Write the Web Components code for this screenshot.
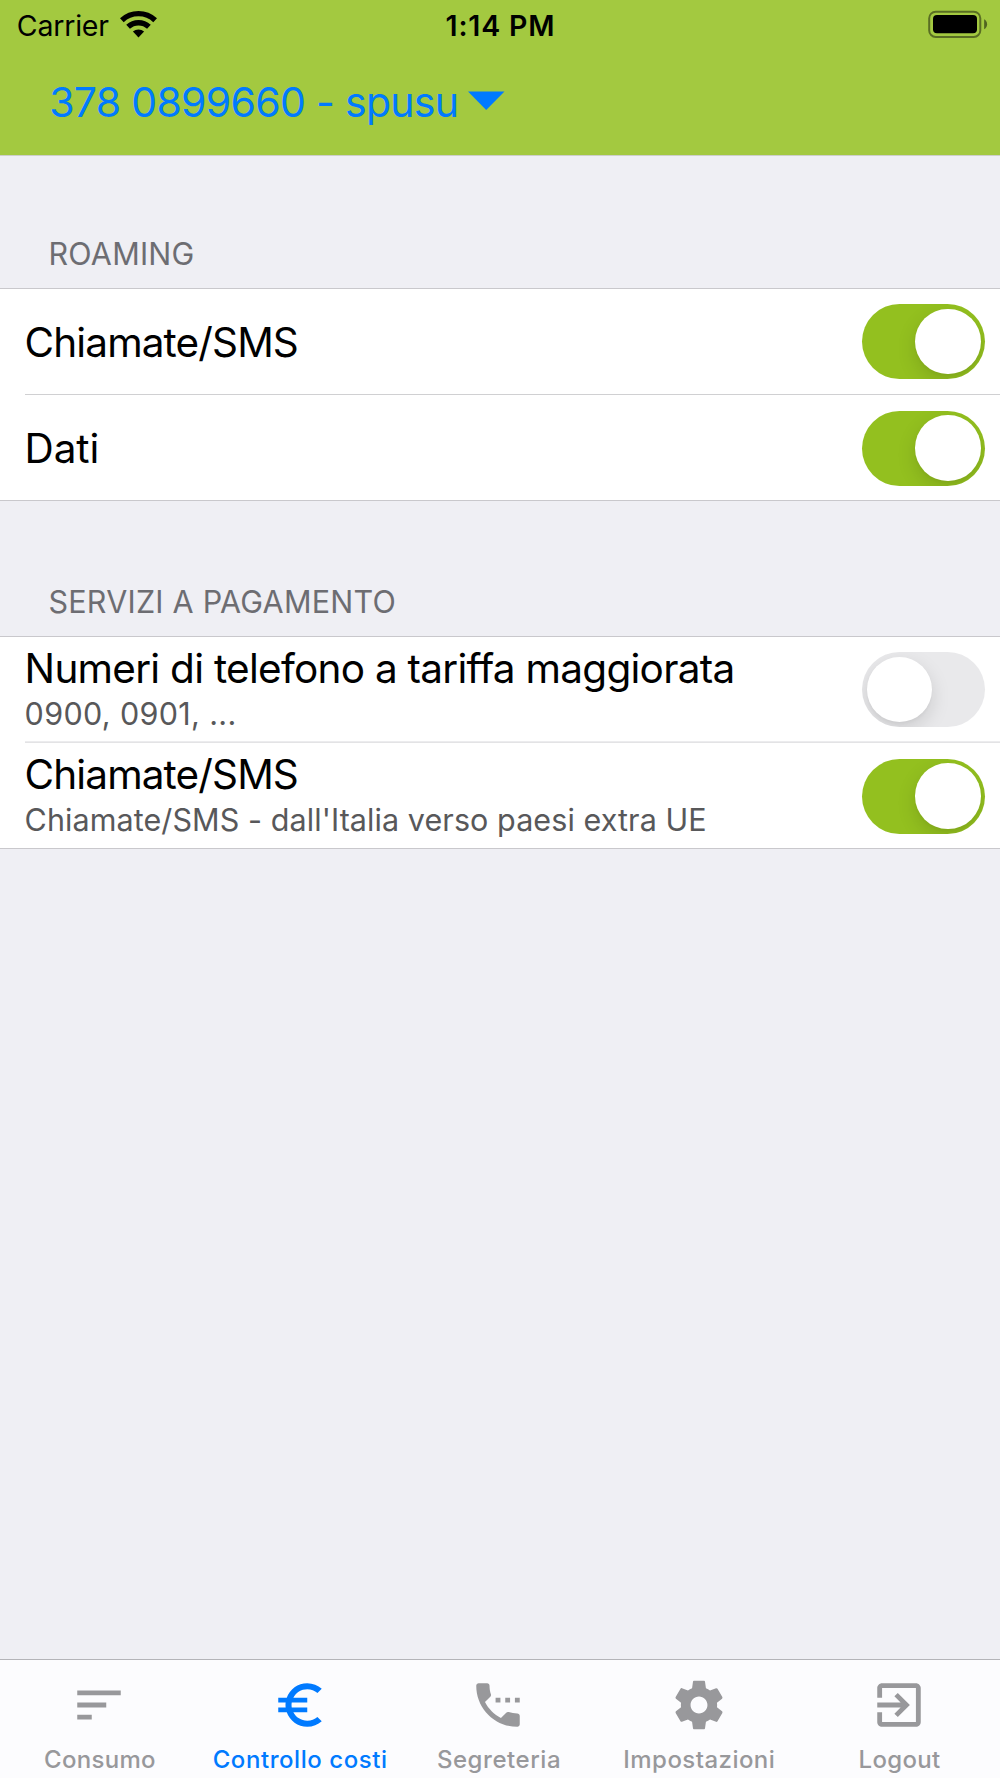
<!DOCTYPE html>
<html lang="it">
<head>
<meta charset="utf-8">
<title>Controllo costi</title>
<style>
  html, body { margin: 0; height: 100%; background: #efeff4; }
  body { font-family: Inter, "Liberation Sans", sans-serif; }
</style>
</head>
<body>
<app-screen>
  <status-bar slot="header" carrier="Carrier" time="1:14 PM"></status-bar>
  <account-picker slot="header">378 0899660 - spusu</account-picker>

  <settings-group label="ROAMING">
    <settings-row title-text="Chiamate/SMS" tracking="-0.88px" on></settings-row>
    <settings-row title-text="Dati" tracking="-0.1px" on></settings-row>
  </settings-group>
  <settings-group label="SERVIZI A PAGAMENTO" style="--head: 135px">
    <settings-row title-text="Numeri di telefono a tariffa maggiorata" tracking="-0.73px" detail="0900, 0901, ..." detail-tracking="0.35px"></settings-row>
    <settings-row title-text="Chiamate/SMS" tracking="-0.88px" detail="Chiamate/SMS - dall'Italia verso paesi extra UE" detail-tracking="0.08px" style="--divider: #e3e3e5; --divider-shadow: 0 -1px #ececee" on></settings-row>
  </settings-group>

  <tab-bar slot="footer">
    <tab-item icon="sort" tracking="0.3px">Consumo</tab-item>
    <tab-item icon="euro" tracking="0.57px" active>Controllo costi</tab-item>
    <tab-item icon="phone" tracking="0.55px">Segreteria</tab-item>
    <tab-item icon="gear" tracking="0.45px">Impostazioni</tab-item>
    <tab-item icon="exit" tracking="0.32px">Logout</tab-item>
  </tab-bar>
</app-screen>

<script>
class BaseElement extends HTMLElement {
  connectedCallback() {
    if (this.shadowRoot) return;
    this.attachShadow({ mode: 'open' }).innerHTML = this.render();
  }
}

customElements.define('app-screen', class extends BaseElement {
  render() {
    return `<style>
      :host { display: flex; flex-direction: column; width: 1000px; height: 1778px; background: #efeff4; overflow: hidden; }
      header { height: 155px; background: #a3c940; border-bottom: 1px solid #cdcfc9; }
      main { flex: 1; }
    </style>
    <header><slot name="header"></slot></header>
    <main><slot></slot></main>
    <slot name="footer"></slot>`;
  }
});

customElements.define('status-bar', class extends BaseElement {
  render() {
    return `<style>
      :host { display: grid; grid-template-columns: 1fr auto 1fr; height: 51px; color: #000; font-size: 28.5px; line-height: 51px; }
      .left { display: flex; align-items: flex-start; padding-left: 16.800px; letter-spacing: -0.2px; }
      .wifi { margin: 9.5px 0 0 11px; }
      .time { font-weight: 600; letter-spacing: 0.85px; padding-left: 1px; }
      .right { display: flex; justify-content: flex-end; align-items: flex-start; padding-right: 12px; }
      .battery { margin-top: 10px; }
      svg { display: block; }
    </style>
    <div class="left"><span>${this.getAttribute('carrier')}</span>
      <svg class="wifi" width="37" height="28" viewBox="0 0 37 28">
        <g fill="none" stroke="#000" stroke-width="5.400">
          <path d="M1.860 10.160a24.400 24.400 0 0 1 33.280 0"/>
          <path d="M8.070 16.820a15.300 15.300 0 0 1 20.860 0"/>
        </g>
        <path d="M12.900 21.420a9 9 0 0 1 11.200 0L18.500 27.600z"/>
      </svg>
    </div>
    <div class="time">${this.getAttribute('time')}</div>
    <div class="right">
      <svg class="battery" width="60" height="29" viewBox="0 0 60 29">
        <rect x="1.200" y="1.700" width="51.100" height="25.200" rx="6.500" fill="none" stroke="#000" stroke-opacity=".45" stroke-width="2"/>
        <rect x="5" y="5" width="44" height="18.200" rx="4"/>
        <path d="M56.100 9.200c1.800.8 3 2.700 3 5s-1.200 4.200-3 5z" opacity=".5"/>
      </svg>
    </div>`;
  }
});

customElements.define('account-picker', class extends BaseElement {
  render() {
    return `<style>
      :host { display: flex; height: 101px; padding-left: 49.200px; color: #007aff; font-size: 41px; line-height: 103px; letter-spacing: -0.7px; }
      svg { display: block; margin: 40px 0 0 10px; }
    </style>
    <span><slot></slot></span>
    <svg width="37" height="19" viewBox="0 0 37 19"><path d="M0 .5h36.500L18.200 19z" fill="currentColor"/></svg>`;
  }
});

customElements.define('settings-group', class extends BaseElement {
  render() {
    return `<style>
      :host { display: block; }
      .head { display: flex; align-items: flex-end; box-sizing: border-box; height: var(--head, 132px); padding: 0 0 14px 48.500px; color: #6d6d72; font-size: 30.500px; line-height: 40px; letter-spacing: .23px; }
      .list { border: solid #c9c8cc; border-width: 1px 0; background: #fff; }
    </style>
    <div class="head">${this.getAttribute('label')}</div>
    <div class="list"><slot></slot></div>`;
  }
});

customElements.define('settings-row', class extends BaseElement {
  render() {
    const detail = this.getAttribute('detail');
    return `<style>
      :host { display: block; }
      .divider { height: 1px; margin-left: 24.500px; background: var(--divider, #d0d0d2); box-shadow: var(--divider-shadow, none); }
      :host(:first-child) .divider { display: none; }
      .row { display: flex; align-items: center; justify-content: space-between; height: 105px; padding: 0 14.700px 0 24.600px; }
      .title { font-size: 40.500px; line-height: 48px; color: #000; padding-top: 3px; }
      .detail { font-size: 30.500px; line-height: 40px; color: #58585a; }
      .two .title { padding-top: 0; margin-top: -1px; }
      .two .detail { margin-top: 1px; }
      :host(:not(:first-child)) toggle-switch { margin-top: 1px; }
    </style>
    <div class="divider"></div>
    <div class="row">
      <div class="${detail ? 'two' : 'one'}">
        <div class="title" style="letter-spacing:${this.getAttribute('tracking')}">${this.getAttribute('title-text')}</div>
        ${detail ? `<div class="detail" style="letter-spacing:${this.getAttribute('detail-tracking')}">${detail}</div>` : ''}
      </div>
      <toggle-switch ${this.hasAttribute('on') ? 'on' : ''}></toggle-switch>
    </div>`;
  }
});

customElements.define('toggle-switch', class extends BaseElement {
  render() {
    return `<style>
      :host { display: flex; align-items: center; box-sizing: border-box; width: 123.200px; height: 75px; padding: 0 4.600px; border-radius: 37.500px; background: #e9e9eb; overflow: hidden; }
      :host([on]) { justify-content: flex-end; background: #93c01f; }
      i { width: 65.600px; height: 65.600px; border-radius: 50%; background: #fff; box-shadow: 0 7px 19px rgba(0,0,0,.13), 0 2px 3px rgba(0,0,0,.03); }
    </style><i></i>`;
  }
});

customElements.define('tab-bar', class extends BaseElement {
  render() {
    return `<style>
      :host { display: flex; height: 118px; background: #fcfcfe; border-top: 1px solid #b4b4b8; }
      ::slotted(*) { flex: 1; }
    </style><slot></slot>`;
  }
});

const ICONS = {
  sort: 'M3 18h6v-2H3v2zM3 6v2h18V6H3zm0 7h12v-2H3v2z',
  euro: 'M15 18.500c-2.510 0-4.680-1.420-5.760-3.500H15v-2H8.580c-.05-.33-.08-.66-.08-1s.03-.67.08-1H15V9H9.240C10.320 6.920 12.500 5.500 15 5.500c1.610 0 3.090.59 4.230 1.570L21 5.300C19.410 3.870 17.300 3 15 3c-3.920 0-7.240 2.510-8.480 6H3v2h3.060c-.04.33-.06.66-.06 1s.02.67.06 1H3v2h3.520c1.240 3.490 4.560 6 8.480 6 2.310 0 4.410-.87 6-2.300l-1.780-1.770c-1.130.98-2.600 1.570-4.220 1.570z',
  phone: 'M11 9h2v2h-2zM15 9h2v2h-2zM19 9h2v2h-2zM20 15.500c-1.250 0-2.450-.2-3.570-.57-.35-.11-.74-.03-1.020.24l-2.200 2.200c-2.830-1.440-5.150-3.750-6.590-6.580l2.200-2.210c.28-.27.36-.66.25-1.010C8.700 6.450 8.500 5.250 8.500 4c0-.55-.45-1-1-1H4c-.55 0-1 .45-1 1 0 9.390 7.610 17 17 17 .55 0 1-.45 1-1v-3.500c0-.55-.45-1-1-1z',
  gear: 'M19.430 12.980c.04-.32.07-.64.07-.98s-.03-.66-.07-.98l2.110-1.650c.19-.15.24-.42.12-.64l-2-3.460c-.12-.22-.39-.3-.61-.22l-2.490 1c-.52-.4-1.080-.73-1.690-.98l-.38-2.650C14.460 2.180 14.250 2 14 2h-4c-.25 0-.46.18-.49.42l-.38 2.650c-.61.25-1.170.59-1.690.98l-2.490-1c-.23-.09-.49 0-.61.22l-2 3.460c-.13.22-.07.49.12.64l2.110 1.650c-.04.32-.07.65-.07.98s.03.66.07.98l-2.110 1.650c-.19.15-.24.42-.12.64l2 3.460c.12.22.39.3.61.22l2.490-1c.52.4 1.080.73 1.690.98l.38 2.650c.03.24.24.42.49.42h4c.25 0 .46-.18.49-.42l.38-2.650c.61-.25 1.170-.59 1.690-.98l2.490 1c.23.09.49 0 .61-.22l2-3.460c.12-.22.07-.49-.12-.64l-2.110-1.650zM12 15.500c-1.930 0-3.500-1.570-3.500-3.500s1.570-3.500 3.500-3.500 3.500 1.570 3.500 3.500-1.570 3.500-3.500 3.500z',
  exit: 'M10.090 15.590L11.500 17l5-5-5-5-1.410 1.410L12.670 11H3v2h9.670l-2.580 2.590zM19 3H5c-1.110 0-2 .9-2 2v4h2V5h14v14H5v-4H3v4c0 1.100.89 2 2 2h14c1.100 0 2-.9 2-2V5c0-1.100-.9-2-2-2z'
};

customElements.define('tab-item', class extends BaseElement {
  render() {
    return `<style>
      :host { display: flex; flex-direction: column; align-items: center; gap: 10.500px; box-sizing: border-box; padding: 16.300px 1.500px 0 0; color: #98989b; }
      :host([active]) { color: #007aff; padding-right: 0; }
      svg { display: block; width: 58px; height: 58px; fill: currentColor; }
      span { font-size: 24px; font-weight: 500; line-height: 30px; white-space: nowrap; padding-left: 1px; letter-spacing: ${this.getAttribute('tracking')}; }
    </style>
    <svg viewBox="0 0 24 24"><path d="${ICONS[this.getAttribute('icon')]}"/></svg>
    <span><slot></slot></span>`;
  }
});
</script>
</body>
</html>
